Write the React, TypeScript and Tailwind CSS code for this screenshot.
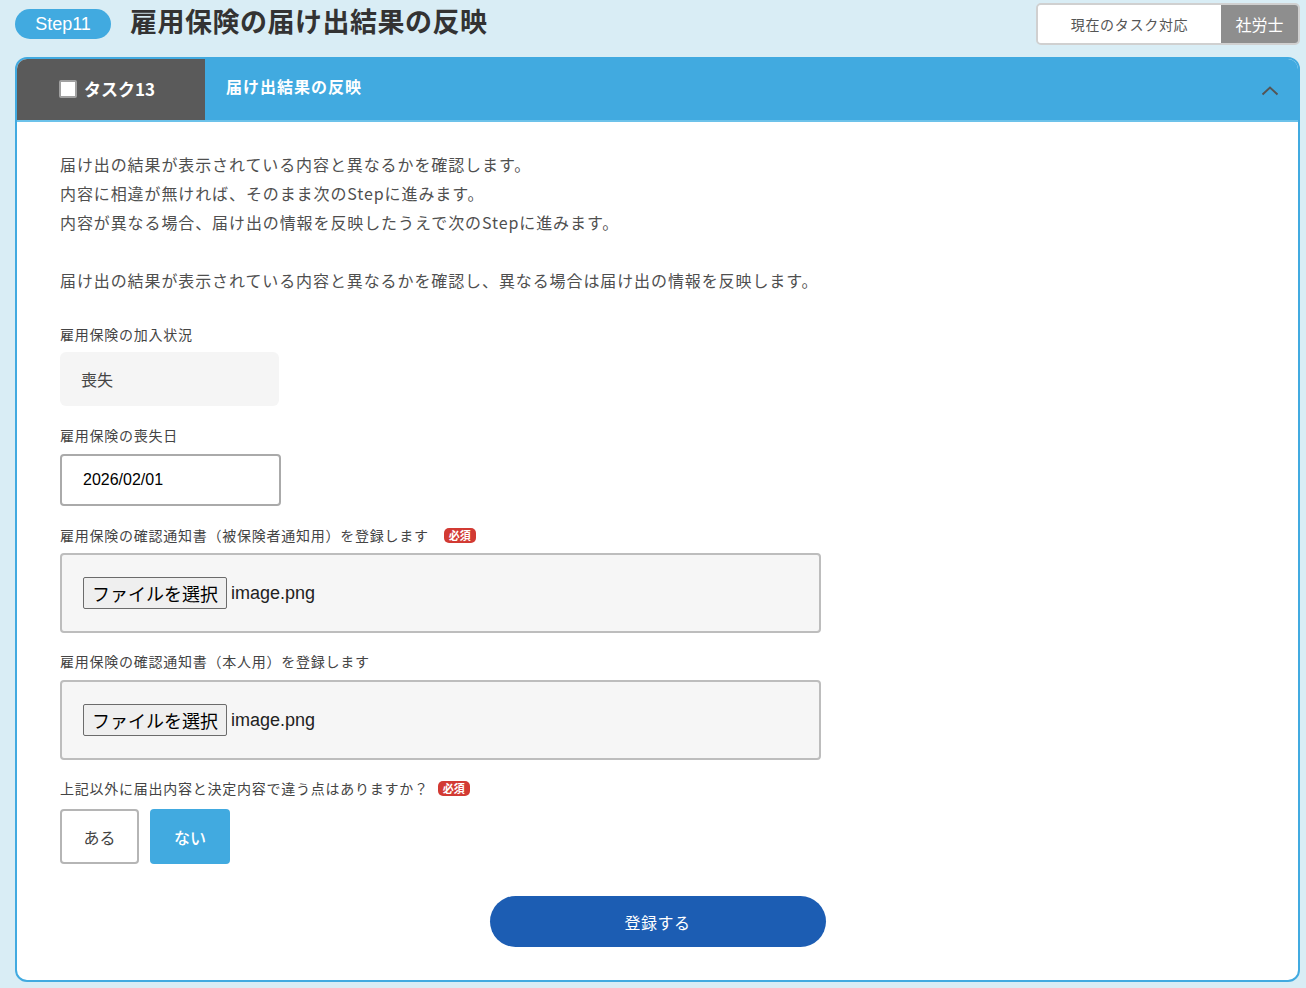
import React from 'react';

const font = "font-['Noto_Sans_CJK_JP','Noto_Sans',sans-serif]";

const Required = ({ gap = 'ml-[15px]' }: { gap?: string }) => (
  <span className={`${gap} inline-flex h-[15px] items-center rounded-[5px] bg-[#d23a33] px-[5px] text-[11px] font-bold leading-none tracking-normal text-white`}>
    必須
  </span>
);

const FileBox = ({ name }: { name: string }) => (
  <div className="flex h-[80px] w-[761px] items-center rounded-[4px] border-2 border-[#bdbdbd] bg-[#f6f6f6] pl-[21px]">
    <span className="flex h-[32px] items-center rounded-[2px] border border-[#6b6b6b] bg-[#efefef] px-[8px] text-[18px] leading-none text-black">
      ファイルを選択
    </span>
    <span className="ml-[4px] font-['Liberation_Sans',sans-serif] text-[18px] text-[#222]">{name}</span>
  </div>
);

const Label = ({ children }: { children: React.ReactNode }) => (
  <div className="flex h-[20px] items-center text-[14px] tracking-[0.75px] text-[#444]">{children}</div>
);

export default function App() {
  return (
    <div className={`min-h-screen bg-[#d9edf5] pl-[15px] pr-[6px] pt-[3px] ${font}`}>
      <div className="flex h-[42px] items-center justify-between">
        <div className="flex items-center gap-[19px]">
          <span className="flex h-[30px] w-[96px] items-center justify-center rounded-full bg-[#41aae0] font-['Liberation_Sans',sans-serif] text-[18px] text-white">
            Step11
          </span>
          <h1 className="pb-[7px] text-[27px] font-bold leading-none tracking-[0.5px] text-[#333]">
            雇用保険の届け出結果の反映
          </h1>
        </div>
        <div className="flex h-[42px] w-[264px] overflow-hidden rounded-[5px] border-2 border-[#d0d0d0]">
          <div className="flex flex-1 items-center justify-center bg-white text-[14px] tracking-[0.7px] text-[#555]">
            現在のタスク対応
          </div>
          <div className="flex w-[77px] items-center justify-center bg-[#8e8e8e] text-[16px] text-white">社労士</div>
        </div>
      </div>

      <div className="mt-[12px] overflow-hidden rounded-[12px] border-2 border-[#41aae0] bg-white">
        <div className="flex h-[63px] border-b-2 border-[#6cc2ea]">
          <div className="flex w-[188px] items-center justify-center gap-[7px] bg-[#5a5a5a] pb-[2px] pr-[8px]">
            <span className="h-[18px] w-[18px] rounded-[2px] border-2 border-[#a0a0a0] bg-white" />
            <span className="text-[17px] font-bold text-white">タスク13</span>
          </div>
          <div className="flex flex-1 items-center justify-between bg-[#41aae0] pb-[8px] pl-[21px] pr-[19px]">
            <span className="text-[16px] font-bold tracking-[1px] text-white">届け出結果の反映</span>
            <svg width="18" height="10" viewBox="0 0 18 10" className="mt-[10px]">
              <path d="M1.5 8.5 L9 1.5 L16.5 8.5" fill="none" stroke="#555" strokeWidth="2" />
            </svg>
          </div>
        </div>

        <div className="px-[43px] pb-[33px] pt-[28px]">
          <p className="text-[16px] leading-[29px] tracking-[0.9px] text-[#4f4f4f]">
            届け出の結果が表示されている内容と異なるかを確認します。
            <br />
            内容に相違が無ければ、そのまま次のStepに進みます。
            <br />
            内容が異なる場合、届け出の情報を反映したうえで次のStepに進みます。
            <br />
            <br />
            届け出の結果が表示されている内容と異なるかを確認し、異なる場合は届け出の情報を反映します。
          </p>

          <div className="mt-[29px]">
            <Label>雇用保険の加入状況</Label>
            <div className="mt-[8px] flex h-[54px] w-[219px] items-center rounded-[6px] bg-[#f5f5f5] pl-[21px] text-[16px] text-[#444]">
              喪失
            </div>
          </div>

          <div className="mt-[19px]">
            <Label>雇用保険の喪失日</Label>
            <div className="mt-[9px] flex h-[52px] w-[221px] items-center rounded-[4px] border-2 border-[#aaa] bg-white pl-[21px] font-['Liberation_Sans',sans-serif] text-[16px] text-black">
              2026/02/01
            </div>
          </div>

          <div className="mt-[19px]">
            <Label>
              雇用保険の確認通知書（被保険者通知用）を登録します
              <Required />
            </Label>
            <div className="mt-[8px]">
              <FileBox name="image.png" />
            </div>
          </div>

          <div className="mt-[18px]">
            <Label>雇用保険の確認通知書（本人用）を登録します</Label>
            <div className="mt-[9px]">
              <FileBox name="image.png" />
            </div>
          </div>

          <div className="mt-[18px]">
            <Label>
              上記以外に届出内容と決定内容で違う点はありますか？
              <Required gap="ml-[9px]" />
            </Label>
            <div className="mt-[11px] flex gap-[11px]">
              <button className="flex h-[55px] w-[79px] items-center justify-center rounded-[4px] border-2 border-[#b5b5b5] bg-white text-[16px] text-[#444]">
                ある
              </button>
              <button className="flex h-[55px] w-[80px] items-center justify-center rounded-[4px] bg-[#41aae0] text-[16px] font-medium text-white">
                ない
              </button>
            </div>
          </div>

          <div className="mt-[32px] flex justify-center">
            <button className="flex h-[51px] w-[336px] items-center justify-center rounded-full bg-[#1c5db3] text-[16px] tracking-[0.5px] text-white">
              登録する
            </button>
          </div>
        </div>
      </div>
    </div>
  );
}
